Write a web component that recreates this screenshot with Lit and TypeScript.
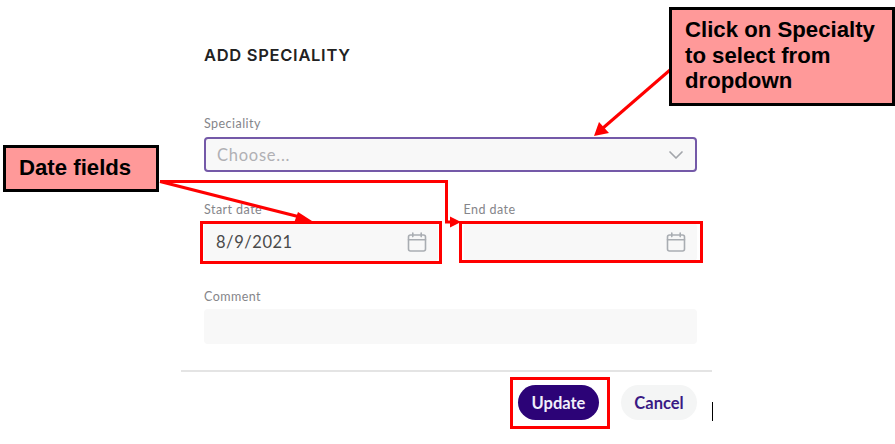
import { LitElement, html, css, svg } from "lit";
import { customElement } from "lit/decorators.js";

const calendar = html`<svg class="ico" width="20" height="20" viewBox="0 0 20 20" fill="none" stroke="#a9adb2" stroke-width="1.6" stroke-linecap="round" stroke-linejoin="round"><rect x="1.5" y="3" width="17" height="16" rx="2"/><path d="M1.5 7.8H18.5M5.8 1v3.6M14.2 1v3.6"/></svg>`;

@customElement("app-root")
export class AppRoot extends LitElement {
  static styles = css`
    :host { display: block; position: relative; width: 895px; height: 444px; overflow: hidden; background: #fff; font-family: "Lato", "Noto Sans", sans-serif; }
    .dialog { width: 531px; margin-left: 181px; padding-top: 45px; display: flex; flex-direction: column; }
    .body { padding: 0 15px 0 23px; display: flex; flex-direction: column; }
    h2 { margin: 0 0 51px; font: 600 16.5px/20px "Inter", "Lato", sans-serif; color: #222; letter-spacing: 0.7px; }
    .field { display: flex; flex-direction: column; gap: 5px; flex: 1; min-width: 0; }
    label { font-size: 12.5px; line-height: 16px; color: #85858a; letter-spacing: 0.45px; }
    .input { display: flex; align-items: center; justify-content: space-between; box-sizing: border-box; background: #f8f8f8; border-radius: 4px; padding: 0 11px 0 12px; font-size: 16.5px; letter-spacing: 0.55px; color: #4a4a4a; }
    .select { height: 35px; border: 2px solid #7459a8; padding-left: 11px; color: #b0b0b4; letter-spacing: 0.75px; }
    .row { display: flex; gap: 26px; margin-top: 30px; }
    .date { height: 38px; }
    .comment { margin-top: 28px; gap: 4px; }
    .area { height: 35px; }
    .divider { height: 2px; background: #e4e4e4; margin-top: 26px; }
    .actions { display: flex; justify-content: flex-end; gap: 22px; padding: 13px 15px 0 0; }
    .btn { height: 35px; box-sizing: border-box; border-radius: 18px; border: 0; font: 700 16.5px "Lato", "Noto Sans", sans-serif; padding: 0; display: flex; align-items: center; justify-content: center; }
    .primary { width: 81px; background: #2c0377; color: #f1effa; }
    .secondary { width: 76px; background: #f4f5f5; color: #3a1a84; }
    .over { position: absolute; left: 0; top: 0; pointer-events: none; }
    .note { position: absolute; box-sizing: border-box; border: 3px solid #000; background: #ff9999; color: #000; font: 700 22.2px/25.5px "Liberation Sans", Arial, sans-serif; }
    .n1 { left: 3px; top: 145px; width: 156px; height: 47px; padding: 7px 0 0 13px; }
    .n2 { left: 669px; top: 7px; width: 226px; height: 99px; padding: 7px 0 0 13px; }
    .box { position: absolute; box-sizing: border-box; border: 3.4px solid #f00; }
    .b1 { left: 200px; top: 221px; width: 242px; height: 43px; }
    .b2 { left: 459px; top: 221px; width: 244px; height: 42px; }
    .b3 { left: 510px; top: 377px; width: 100px; height: 52px; }
    .cursor { position: absolute; left: 712px; top: 402px; width: 1px; height: 19px; background: #000; }
  `;

  render() {
    return html`
      <div class="dialog">
        <div class="body">
          <h2>ADD SPECIALITY</h2>
          <div class="field">
            <label>Speciality</label>
            <div class="input select">
              <span>Choose...</span>
              <svg width="16" height="10" viewBox="0 0 16 10" fill="none" stroke="#a3a6ab" stroke-width="1.7" stroke-linecap="round" stroke-linejoin="round"><path d="M2 2l6 6 6-6"/></svg>
            </div>
          </div>
          <div class="row">
            <div class="field"><label>Start date</label><div class="input date"><span>8/9/2021</span>${calendar}</div></div>
            <div class="field"><label>End date</label><div class="input date"><span></span>${calendar}</div></div>
          </div>
          <div class="field comment"><label>Comment</label><div class="input area"></div></div>
        </div>
        <div class="divider"></div>
        <div class="actions">
          <button class="btn primary">Update</button>
          <button class="btn secondary">Cancel</button>
        </div>
      </div>

      <div class="box b1"></div>
      <div class="box b2"></div>
      <div class="box b3"></div>
      <svg class="over" width="895" height="444" viewBox="0 0 895 444" fill="none">
        ${svg`<path d="M160 181.5L300 217" stroke="#f00" stroke-width="3"/>
        <path d="M312 221L294 223L298 212Z" fill="#f00"/>
        <path d="M160 181.5H446.5V222H451" stroke="#f00" stroke-width="3"/>
        <path d="M461 222L450 216.5V227.5Z" fill="#f00"/>
        <path d="M670 70L603 128" stroke="#f00" stroke-width="3"/>
        <path d="M594 136L599 122L609 133Z" fill="#f00"/>`}
      </svg>
      <div class="note n1">Date fields</div>
      <div class="note n2">Click on Specialty<br />to select from<br />dropdown</div>
      <div class="cursor"></div>
    `;
  }
}
